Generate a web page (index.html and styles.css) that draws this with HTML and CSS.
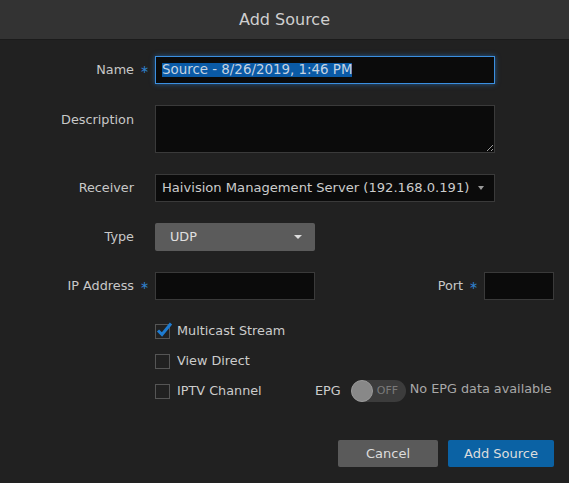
FILE: index.html
```html
<!DOCTYPE html>
<html lang="en">
<head>
    <meta charset="UTF-8">
    <meta name="viewport" content="width=device-width, initial-scale=1.0">
    <title>Add Source</title>
    <link rel="stylesheet" href="styles.css">
</head>
<body>
    <div class="dialog">
        <div class="dialog-header">Add Source</div>

        <div class="dialog-body">
            <div class="form-row">
                <label class="form-label">Name</label>
                <span class="req">∗</span>
                <div class="text-box name-box focused"><span class="selected">Source - 8/26/2019, 1:46 PM</span></div>
            </div>

            <div class="form-row top">
                <label class="form-label" for="description">Description</label>
                <span class="req"></span>
                <textarea id="description" class="text-area"></textarea>
            </div>

            <div class="form-row">
                <label class="form-label">Receiver</label>
                <span class="req"></span>
                <div class="text-box select-box">
                    <span>Haivision Management Server (192.168.0.191)</span>
                    <span class="caret small"></span>
                </div>
            </div>

            <div class="form-row">
                <label class="form-label">Type</label>
                <span class="req"></span>
                <div class="drop-button">
                    <span>UDP</span>
                    <span class="caret"></span>
                </div>
            </div>

            <div class="form-row">
                <label class="form-label">IP Address</label>
                <span class="req">∗</span>
                <div class="text-box short"></div>
                <div class="port-group">
                    <label class="form-label inline">Port</label>
                    <span class="req">∗</span>
                    <div class="text-box port"></div>
                </div>
            </div>

            <div class="check-group">
                <div class="check-row">
                    <span class="check-box checked">
                        <svg width="19" height="19" viewBox="0 0 19 19"><path d="M3 9.5 L7 13.5 L16 2.5" fill="none" stroke="#1e7bd0" stroke-width="3"/></svg>
                    </span>
                    <span class="check-label">Multicast Stream</span>
                </div>
                <div class="check-row">
                    <span class="check-box"></span>
                    <span class="check-label">View Direct</span>
                </div>
                <div class="check-row">
                    <div class="check-cell">
                        <span class="check-box"></span>
                        <span class="check-label">IPTV Channel</span>
                    </div>
                    <span class="epg-label">EPG</span>
                    <span class="toggle"><span class="knob"></span><span class="toggle-text">OFF</span></span>
                    <span class="epg-note">No EPG data available</span>
                </div>
            </div>

            <div class="button-row">
                <button class="btn btn-cancel">Cancel</button>
                <button class="btn btn-primary">Add Source</button>
            </div>
        </div>
    </div>
</body>
</html>
```

FILE: styles.css
```css
body {
    margin: 0;
    background-color: #212121;
    font-family: "DejaVu Sans", Verdana, sans-serif;
    font-size: 12.8px;
    line-height: 16px;
    color: #c8c8c8;
}
.dialog {
    width: 569px;
    height: 483px;
    background-color: #212121;
}
.dialog-header {
    height: 39px;
    line-height: 39px;
    background-color: #333333;
    border-bottom: 1px solid #1b1b1b;
    text-align: center;
    font-size: 16px;
    color: #cfcfcf;
}
.dialog-body {
    padding: 16px 15px 0 0;
    display: flex;
    flex-direction: column;
    gap: 21px;
}
.form-row {
    display: flex;
    align-items: center;
}
.form-row.top {
    align-items: flex-start;
}
.form-row.top .form-label {
    padding-top: 7px;
}
.form-label {
    width: 134px;
    flex-shrink: 0;
    text-align: right;
    color: #c8c8c8;
}
.form-label.inline {
    width: auto;
}
.req {
    box-sizing: border-box;
    width: 21px;
    flex-shrink: 0;
    padding-left: 6px;
    color: #2f7fcc;
    font-size: 11px;
}
.text-box {
    box-sizing: border-box;
    width: 340px;
    height: 28px;
    background-color: #0b0b0b;
    border: 1px solid #3a3a3a;
    padding: 0 6px;
    display: flex;
    align-items: center;
    color: #cccccc;
    font-size: 13.1px;
}
.text-box.focused {
    border-color: #3b8fe0;
    box-shadow: 0 0 5px rgba(40, 130, 220, 0.6);
}
.name-box {
    font-size: 13.4px;
}
.selected {
    background-color: #0a5aa6;
    color: #c6d3e0;
    line-height: 14px;
}
.select-box {
    justify-content: space-between;
}
.text-area {
    box-sizing: border-box;
    width: 340px;
    height: 48px;
    background-color: #0b0b0b;
    border: 1px solid #3a3a3a;
    color: #cccccc;
    margin: 0;
    font-family: inherit;
}
.caret {
    width: 0;
    height: 0;
    border-left: 4px solid transparent;
    border-right: 4px solid transparent;
    border-top: 4px solid #dddddd;
}
.caret.small {
    border-left-width: 3.5px;
    border-right-width: 3.5px;
    border-top-color: #9a9a9a;
    margin-right: 4px;
}
.drop-button {
    box-sizing: border-box;
    width: 160px;
    height: 28px;
    background-color: #5b5b5b;
    border-radius: 2px;
    padding: 0 13px 0 15px;
    display: flex;
    align-items: center;
    justify-content: space-between;
    color: #e0e0e0;
    font-size: 12.8px;
}
.text-box.short {
    width: 160px;
}
.port-group {
    margin-left: auto;
    display: flex;
    align-items: center;
}
.text-box.port {
    width: 70px;
}
.check-group {
    display: flex;
    flex-direction: column;
    gap: 8px;
    padding-left: 155px;
    margin-top: -1px;
}
.check-row {
    display: flex;
    align-items: center;
    height: 22px;
}
.check-cell {
    width: 160px;
    display: flex;
    align-items: center;
}
.check-box {
    position: relative;
    box-sizing: border-box;
    width: 15px;
    height: 15px;
    border: 1px solid #555555;
    flex-shrink: 0;
}
.check-box svg {
    position: absolute;
    left: -1px;
    top: -4px;
}
.check-label {
    margin-left: 7px;
    color: #cccccc;
}
.epg-label {
    color: #cccccc;
    margin-right: 10px;
}
.toggle {
    position: relative;
    width: 55px;
    height: 22px;
    border-radius: 11px;
    background-color: #3c3c3c;
    flex-shrink: 0;
}
.knob {
    position: absolute;
    left: 0;
    top: 0;
    box-sizing: border-box;
    width: 22px;
    height: 22px;
    border-radius: 50%;
    border: 1px solid #9a9a9a;
    background-color: #888888;
}
.toggle-text {
    position: absolute;
    left: 26px;
    top: 3px;
    font-size: 11px;
    color: #7a7a7a;
}
.epg-note {
    margin-left: 4px;
    margin-top: -5px;
    color: #a8a8a8;
}
.button-row {
    margin-top: 17px;
    display: flex;
    justify-content: flex-end;
    gap: 10px;
}
.btn {
    height: 27px;
    border: none;
    border-radius: 2px;
    font-family: inherit;
    font-size: 13px;
    color: #dddddd;
    padding: 0;
}
.btn-cancel {
    width: 100px;
    background-color: #5a5a5a;
}
.btn-primary {
    width: 106px;
    background-color: #0b62a4;
}
```
